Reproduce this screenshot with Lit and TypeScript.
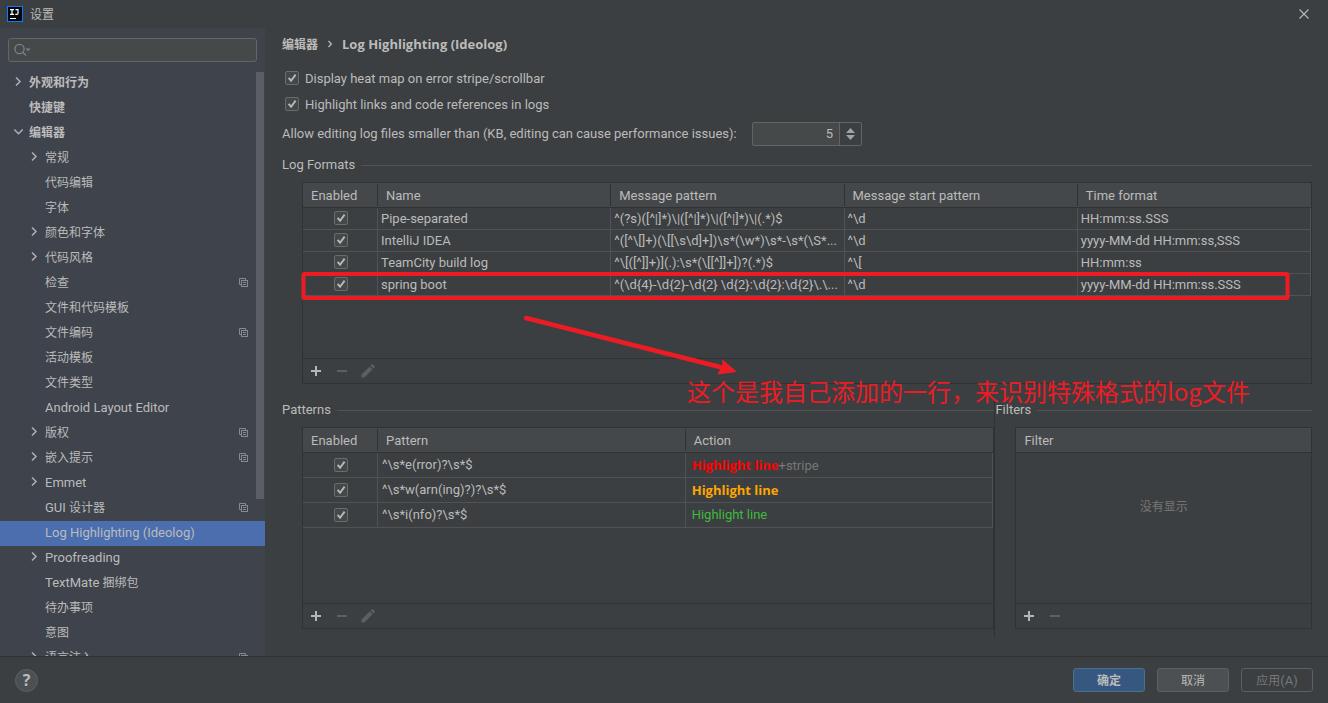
import { LitElement, html, css, svg, nothing } from "lit";
import { customElement } from "lit/decorators.js";
import { classMap } from "lit/directives/class-map.js";

type Node = { label: string; level: 0 | 1; arrow?: "right" | "down"; project?: boolean; selected?: boolean };

const TREE: Node[] = [
  { label: "外观和行为", level: 0, arrow: "right" },
  { label: "快捷键", level: 0 },
  { label: "编辑器", level: 0, arrow: "down" },
  { label: "常规", level: 1, arrow: "right" },
  { label: "代码编辑", level: 1 },
  { label: "字体", level: 1 },
  { label: "颜色和字体", level: 1, arrow: "right" },
  { label: "代码风格", level: 1, arrow: "right" },
  { label: "检查", level: 1, project: true },
  { label: "文件和代码模板", level: 1 },
  { label: "文件编码", level: 1, project: true },
  { label: "活动模板", level: 1 },
  { label: "文件类型", level: 1 },
  { label: "Android Layout Editor", level: 1 },
  { label: "版权", level: 1, arrow: "right", project: true },
  { label: "嵌入提示", level: 1, arrow: "right", project: true },
  { label: "Emmet", level: 1, arrow: "right" },
  { label: "GUI 设计器", level: 1, project: true },
  { label: "Log Highlighting (Ideolog)", level: 1, selected: true },
  { label: "Proofreading", level: 1, arrow: "right" },
  { label: "TextMate 捆绑包", level: 1 },
  { label: "待办事项", level: 1 },
  { label: "意图", level: 1 },
  { label: "语言注入", level: 1, arrow: "right", project: true },
];

const FORMATS = [
  ["Pipe-separated", "^(?s)([^|]*)\\|([^|]*)\\|([^|]*)\\|(.*)$", "^\\d", "HH:mm:ss.SSS"],
  ["IntelliJ IDEA", "^([^\\[]+)(\\[[\\s\\d]+])\\s*(\\w*)\\s*-\\s*(\\S*...", "^\\d", "yyyy-MM-dd HH:mm:ss,SSS"],
  ["TeamCity build log", "^\\[([^]]+)](.):\\s*(\\[[^]]+])?(.*)$", "^\\[", "HH:mm:ss"],
  ["spring boot", "^(\\d{4}-\\d{2}-\\d{2} \\d{2}:\\d{2}:\\d{2}\\.\\...", "^\\d", "yyyy-MM-dd HH:mm:ss.SSS"],
];

const PATTERNS = [
  { pattern: "^\\s*e(rror)?\\s*$", tone: "error", stripe: true },
  { pattern: "^\\s*w(arn(ing)?)?\\s*$", tone: "warn", stripe: false },
  { pattern: "^\\s*i(nfo)?\\s*$", tone: "info", stripe: false },
];

// Chinese glyphs are set one step smaller than Latin ones.
const mixed = (text: string) =>
  text.split(/([\u4e00-\u9fff]+)/).map((part) => (/[\u4e00-\u9fff]/.test(part) ? html`<span class="zh">${part}</span>` : part));

const chevron = (dir?: string) => html`<svg class="chevron" width="22" height="25" viewBox="0 0 22 25" aria-hidden="true">
  ${dir === "right" ? svg`<path d="M9 7.5 L13 11.5 L9 15.5" />` : dir === "down" ? svg`<path d="M7.3 9.500 L11.500 13.700 L15.700 9.500" />` : nothing}
</svg>`;

const projectIcon = html`<svg class="project" width="9" height="9" viewBox="0 0 9 9" aria-hidden="true">
  <path d="M2 6.500H.5V.5H6.500V2" /><rect x="2.500" y="2.500" width="6" height="6" /><path d="M4 4.500H7M4 6.500H7" />
</svg>`;

const addIcon = html`<svg width="12" height="12" viewBox="0 0 12 12"><path d="M1 6H11M6 1V11" fill="none" stroke="#b4b6b8" stroke-width="2" /></svg>`;
const removeIcon = html`<svg width="12" height="12" viewBox="0 0 12 12"><path d="M1 6H11" fill="none" stroke="#5d5f61" stroke-width="2" /></svg>`;
const editIcon = html`<svg width="14" height="14" viewBox="0 0 14 14" fill="#5d5f61"><path d="M.5 13.500V10.600L8.700 2.400L11.600 5.300L3.400 13.500ZM9.500 1.600L10.600.5Q11.300 0 12 .6L13.400 2Q14 2.700 13.500 3.400L12.400 4.500Z" /></svg>`;

const toolbar = (name: string, edit: boolean) => html`<div class="toolbar" role="toolbar" aria-label=${name}>
  <button class="tool" aria-label="Add">${addIcon}</button>
  <button class="tool" aria-label="Remove" disabled>${removeIcon}</button>
  ${edit ? html`<button class="tool" aria-label="Edit" disabled>${editIcon}</button>` : nothing}
</div>`;

@customElement("app-root")
export class AppRoot extends LitElement {
  static styles = css`
    :host {
      display: flex;
      flex-direction: column;
      height: 100vh;
      overflow: hidden;
      box-sizing: border-box;
      background: #3c3f41;
      color: #bbbbbb;
      font: 13px/20px Roboto, "Noto Sans CJK SC", sans-serif;
      --edge: #323232;
      --grid: #505254;
    }
    button, input { font: inherit; color: inherit; margin: 0; padding: 0; box-sizing: border-box; }
    .zh { font: 12px/20px "Noto Sans CJK SC", sans-serif; font-weight: inherit; }
    .strong { font-family: "Open Sans", "Noto Sans CJK SC", sans-serif; font-weight: 700; }

    .titlebar { display: flex; align-items: center; height: 28px; flex: none; padding: 0 18px 0 7px; }
    .titlebar .zh { flex: 1; margin-left: 7px; }
    .close { display: flex; border: 0; background: none; }

    .body { display: flex; flex: 1; min-height: 0; }
    .sidebar { width: 265px; flex: none; display: flex; flex-direction: column; background: #3e434c; overflow: hidden; }
    .search { display: flex; align-items: center; height: 24px; box-sizing: border-box; flex: none; margin: 10px 8px 9px; padding: 0 5px; gap: 4px; border: 1px solid #646665; border-radius: 3px; background: #45494a; }
    .search input { flex: 1; min-width: 0; border: 0; outline: 0; background: none; }
    .treewrap { display: flex; flex: 1; min-height: 0; position: relative; }
    .tree { flex: 1; margin: 0; padding: 0; list-style: none; overflow: hidden; }
    .row { display: flex; align-items: center; height: 23px; padding: 0 17px 2px 7px; color: inherit; text-decoration: none; white-space: nowrap; }
    .row.child { padding-left: 23px; }
    .row.top { font-weight: 700; }
    .row.selected { background: #4b6eaf; }
    .row .label { flex: 1; }
    .chevron { flex: none; fill: none; stroke: #afb1b3; stroke-width: 1.5; }
    .project { fill: none; stroke: #868a8f; stroke-width: 1; }
    .thumb { position: absolute; top: 1px; right: 1px; width: 8px; height: 73%; background: #5b5e66; }

    .main { position: relative; flex: 1; min-width: 0; display: flex; flex-direction: column; padding: 0 16px 18px 17px; }
    .crumbs { display: flex; align-items: center; height: 32px; gap: 10px; flex: none; }
    .crumbs .zh { font-weight: 700; }
    .check { display: flex; align-items: center; height: 26px; gap: 6px; padding-left: 3px; flex: none; }
    .check span { padding-top: 2px; }
    .check.first { margin-top: 5px; }
    .box {
      appearance: none; display: block; width: 14px; height: 14px; flex: none; border: 1px solid #6b6b6b; border-radius: 2px;
      background: #43494a url("data:image/svg+xml,%3Csvg xmlns='http://www.w3.org/2000/svg' viewBox='0 0 12 12'%3E%3Cpath d='M2.6 5.8L5.100 8.700L9.600 2.600' fill='none' stroke='%23b8b8b8' stroke-width='1.900'/%3E%3C/svg%3E") center / 12px 12px no-repeat;
    }
    .size { display: flex; align-items: center; gap: 12px; margin: 5px 0 9px; flex: none; white-space: nowrap; }
    .size label { min-width: 458px; }
    .spinner { display: flex; width: 110px; height: 24px; box-sizing: border-box; border: 1px solid #646464; border-radius: 2px; background: #45494a; }
    .spinner input { flex: 1; min-width: 0; border: 0; border-right: 1px solid #646464; outline: 0; background: none; text-align: right; padding-right: 6px; appearance: textfield; }
    .spinner input::-webkit-inner-spin-button { appearance: none; margin: 0; }
    .steps { display: flex; flex-direction: column; align-items: center; justify-content: center; gap: 2px; width: 21px; background: #3c3f41; }
    .step { display: flex; border: 0; background: none; }

    .group { display: flex; flex-direction: column; min-height: 0; min-width: 0; }
    .formats { flex: 1 1 0; margin-bottom: 16px; }
    .title { display: flex; align-items: center; gap: 6px; height: 20px; margin: 0 0 7px; font-size: 13px; font-weight: 400; flex: none; }
    .title::after { content: ""; flex: 1; height: 1px; background: #515355; }
    .split { flex: 1 1 0; min-height: 0; padding-bottom: 9px; display: grid; grid-template-columns: 9fr 1px 4fr; }
    .divider { background: #2f3133; margin-bottom: -9px; }
    .panel { flex: 1; min-height: 0; margin-left: 20px; border: 1px solid var(--edge); display: flex; flex-direction: column; }
    .grow { flex: 1; }
    table { width: 100%; table-layout: fixed; border-collapse: separate; border-spacing: 0; }
    th { height: 22px; padding: 2px 0 0 8px; font-weight: 400; text-align: left; border-bottom: 1px solid var(--edge); background: linear-gradient(var(--edge), var(--edge)) right center / 1px 22px no-repeat #45484a; }
    th:last-child { background: #45484a; }
    td { height: 21px; padding: 0 0 0 3px; border-right: 1px solid var(--grid); border-bottom: 1px solid var(--grid); white-space: nowrap; overflow: hidden; }
    .tall td { height: 24px; padding-left: 4px; }
    .tall .action { padding-left: 6px; }
    .enabled { width: 75px; box-sizing: border-box; height: 25px; }
    td .box { margin: 0 auto; }
    td.tick { height: 20px; padding: 0 0 1px 2px; }
    .tall td.tick { height: 24px; padding: 0 0 0 2px; }
    .toolbar { display: flex; align-items: center; gap: 2px; height: 24px; flex: none; border-top: 1px solid var(--edge); padding-left: 1px; }
    .tool { display: flex; align-items: center; justify-content: center; width: 24px; height: 24px; border: 0; background: none; }
    .error { color: #ff0000; }
    .warn { color: #ffa500; }
    .info { color: #3fb93f; }
    .stripe { color: #777777; }
    .empty { flex: 1; display: flex; justify-content: center; padding-top: 43px; color: #777777; }

    .marks { position: absolute; left: 0; top: 0; pointer-events: none; overflow: visible; }
    .note { position: absolute; left: 422px; top: 345px; color: #ed1c24; font: 400 24px/36px "Noto Sans CJK SC", sans-serif; white-space: nowrap; }

    .footer { display: flex; align-items: center; gap: 12px; height: 47px; box-sizing: border-box; flex: none; border-top: 1px solid var(--edge); padding: 0 15px; }
    .help { width: 23px; height: 23px; border: 1px solid #5e6163; border-radius: 50%; background: #4c5052; margin-right: auto; font: 700 16px/20px "Open Sans", sans-serif; text-align: center; }
    .btn { width: 72px; height: 24px; border: 1px solid #5e6060; border-radius: 3px; background: #4c5052; }
    .btn.primary { background: #365880; border-color: #4c708c; font-weight: 700; }
    .btn:disabled { background: none; color: #777777; }
  `;

  private renderNode(n: Node) {
    return html`<li>
      <a href="#" class=${classMap({ row: true, top: n.level === 0, child: n.level === 1, selected: !!n.selected })}>
        ${chevron(n.arrow)}<span class="label">${mixed(n.label)}</span>${n.project ? projectIcon : nothing}
      </a>
    </li>`;
  }

  render() {
    return html`
      <header class="titlebar">
        <svg width="16" height="16" viewBox="0 0 16 16" aria-hidden="true">
          <rect width="16" height="16" fill="#087cfa" /><rect x="1" y="1" width="14" height="14" fill="#05070a" />
          <path d="M3 3.600H7M5 3.600V8.400M3 8.400H7M8.500 3.600H11V7.200Q11 8.400 9.800 8.400H8.300M3 12.500H9" fill="none" stroke="#fff" stroke-width="1.200" />
        </svg>
        <span class="zh">设置</span>
        <button class="close" aria-label="Close">
          <svg width="12" height="12" viewBox="0 0 12 12"><path d="M1.500 1.500L10.500 10.500M10.500 1.500L1.500 10.500" stroke="#b4b4b4" stroke-width="1.200" /></svg>
        </button>
      </header>

      <div class="body">
        <nav class="sidebar">
          <div class="search">
            <svg width="18" height="14" viewBox="0 0 18 14" fill="none" stroke="#7b8286" stroke-width="1.300" aria-hidden="true">
              <circle cx="5.500" cy="6" r="4.600" /><path d="M8.800 9.300L12 12.500" /><path d="M11.500 5.500H16.500L14 8.300Z" fill="#7b8286" stroke="none" />
            </svg>
            <input type="text" aria-label="Search" />
          </div>
          <div class="treewrap">
            <ul class="tree">${TREE.map((n) => this.renderNode(n))}</ul>
            <div class="thumb"></div>
          </div>
        </nav>

        <main class="main">
          <div class="crumbs">
            <span class="zh">编辑器</span>
            <svg width="4" height="8" viewBox="0 0 4 8"><path d="M.5 1L3.300 4L.5 7" fill="none" stroke="#bbb" stroke-width="1.200" /></svg>
            <span class="strong">Log Highlighting (Ideolog)</span>
          </div>
          <label class="check first"><input class="box" type="checkbox" checked /><span>Display heat map on error stripe/scrollbar</span></label>
          <label class="check"><input class="box" type="checkbox" checked /><span>Highlight links and code references in logs</span></label>
          <div class="size">
            <label for="limit">Allow editing log files smaller than (KB, editing can cause performance issues):</label>
            <div class="spinner">
              <input id="limit" type="number" value="5" />
              <div class="steps">
                <button class="step" aria-label="Increase"><svg width="9" height="5" viewBox="0 0 9 5"><path d="M0 5L4.500 0L9 5Z" fill="#a0a3a5" /></svg></button>
                <button class="step" aria-label="Decrease"><svg width="9" height="5" viewBox="0 0 9 5"><path d="M0 0L4.500 5L9 0Z" fill="#a0a3a5" /></svg></button>
              </div>
            </div>
          </div>

          <section class="group formats">
            <h2 class="title">Log Formats</h2>
            <div class="panel">
              <table>
                <thead><tr><th class="enabled">Enabled</th><th>Name</th><th>Message pattern</th><th>Message start pattern</th><th>Time format</th></tr></thead>
                <tbody>
                  ${FORMATS.map((r) => html`<tr>
                    <td class="tick"><input class="box" type="checkbox" checked aria-label=${r[0]} /></td>
                    ${r.map((c) => html`<td>${c}</td>`)}
                  </tr>`)}
                </tbody>
              </table>
              <div class="grow"></div>
              ${toolbar("Log Formats", true)}
            </div>
          </section>

          <div class="split">
            <section class="group">
              <h2 class="title">Patterns</h2>
              <div class="panel">
                <table class="tall">
                  <thead><tr><th class="enabled">Enabled</th><th>Pattern</th><th>Action</th></tr></thead>
                  <tbody>
                    ${PATTERNS.map((p) => html`<tr>
                      <td class="tick"><input class="box" type="checkbox" checked aria-label=${p.pattern} /></td>
                      <td>${p.pattern}</td>
                      <td class="action"><span class=${classMap({ [p.tone]: true, strong: p.tone !== "info" })}>Highlight line</span>${p.stripe ? html`<span class="stripe">+stripe</span>` : nothing}</td>
                    </tr>`)}
                  </tbody>
                </table>
                <div class="grow"></div>
                ${toolbar("Patterns", true)}
              </div>
            </section>
            <div class="divider"></div>
            <section class="group">
              <h2 class="title">Filters</h2>
              <div class="panel">
                <table><thead><tr><th>Filter</th></tr></thead></table>
                <div class="empty"><span class="zh">没有显示</span></div>
                ${toolbar("Filters", false)}
              </div>
            </section>
          </div>

          <svg class="marks" width="1063" height="628" viewBox="0 0 1063 628" aria-hidden="true">
            <rect x="38.500" y="246" width="984" height="24" rx="1" fill="none" stroke="#ed1c24" stroke-width="4" />
            <path d="M261 290L457 339.500" stroke="#ed1c24" stroke-width="4.500" stroke-linecap="round" />
            <path d="M471 343.500L457.500 332L458 337L453 346Z" fill="#ed1c24" stroke="#ed1c24" stroke-linejoin="round" />
          </svg>
          <div class="note">这个是我自己添加的一行，来识别特殊格式的log文件</div>
        </main>
      </div>

      <footer class="footer">
        <button class="help" aria-label="Help">?</button>
        <button class="btn primary">${mixed("确定")}</button>
        <button class="btn">${mixed("取消")}</button>
        <button class="btn" disabled>${mixed("应用(A)")}</button>
      </footer>
    `;
  }
}
